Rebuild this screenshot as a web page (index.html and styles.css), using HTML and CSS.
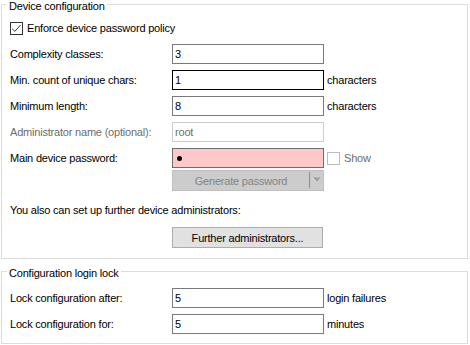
FILE: index.html
```html
<!DOCTYPE html>
<html>
<head>
<meta charset="utf-8">
<link rel="stylesheet" href="styles.css">
</head>
<body>
<fieldset class="group group-device">
  <legend class="group-title">Device configuration</legend>
  <div class="rows">
    <label class="check-row">
      <span class="check">
        <svg width="13" height="13" viewBox="0 0 13 13"><rect x="0.5" y="0.5" width="12" height="12" fill="#fff" stroke="#333"/><polyline points="2.2,6.8 4.8,9.4 10.6,3" fill="none" stroke="#333" stroke-width="1"/></svg>
      </span>
      <span>Enforce device password policy</span>
    </label>
    <div class="row">
      <span class="lbl">Complexity classes:</span>
      <input class="field" type="text" value="3">
    </div>
    <div class="row">
      <span class="lbl">Min. count of unique chars:</span>
      <input class="field field-focus" type="text" value="1">
      <span class="suffix">characters</span>
    </div>
    <div class="row">
      <span class="lbl">Minimum length:</span>
      <input class="field" type="text" value="8">
      <span class="suffix">characters</span>
    </div>
    <div class="row">
      <span class="lbl lbl-disabled">Administrator name (optional):</span>
      <input class="field field-disabled" type="text" value="root" disabled>
    </div>
    <div class="row">
      <span class="lbl">Main device password:</span>
      <div class="field field-pass"><span class="dot"></span></div>
      <span class="show">
        <span class="show-box"></span>
        <span class="show-text">Show</span>
      </span>
    </div>
    <div class="row row-gen">
      <span></span>
      <div class="split-btn">
        <span class="split-main">Generate password</span>
        <span class="split-arrow">
          <svg width="9" height="6" viewBox="0 0 9 6"><polygon points="0.5,0.5 8.5,0.5 4.5,5" fill="#9c9c9c"/><polyline points="0.5,0.5 4.5,5" fill="none" stroke="#e6e6e6" stroke-width="1"/></svg>
        </span>
      </div>
    </div>
    <div class="row row-text">
      <span class="note">You also can set up further device administrators:</span>
    </div>
    <div class="row row-further">
      <span></span>
      <button class="btn" type="button">Further administrators...</button>
    </div>
  </div>
</fieldset>
<fieldset class="group group-lock">
  <legend class="group-title">Configuration login lock</legend>
  <div class="rows">
    <div class="row">
      <span class="lbl">Lock configuration after:</span>
      <input class="field" type="text" value="5">
      <span class="suffix">login failures</span>
    </div>
    <div class="row">
      <span class="lbl">Lock configuration for:</span>
      <input class="field" type="text" value="5">
      <span class="suffix">minutes</span>
    </div>
  </div>
</fieldset>
</body>
</html>
```
FILE: styles.css
```css
* {
  box-sizing: border-box;
}

html,
body {
  margin: 0;
  padding: 0;
  background: #ffffff;
}

body {
  width: 470px;
  height: 345px;
  overflow: hidden;
  font-family: "Liberation Sans", Arial, sans-serif;
  font-size: 11px;
  letter-spacing: -0.2px;
  color: #000000;
}

.group {
  width: 467px;
  margin: 0 0 0 1px;
  border: 1px solid #dcdcdc;
  padding: 9px 0 11px 8px;
  min-width: 0;
}

.group-lock {
  margin-top: 8px;
  padding-top: 12px;
  padding-bottom: 9px;
}

.group-title {
  height: 9px;
  line-height: 13px;
  padding: 0 2px;
  margin-left: -3px;
}

.rows {
  display: flex;
  flex-direction: column;
}

.check-row {
  display: flex;
  align-items: center;
  height: 20px;
  gap: 4px;
}

.check {
  display: block;
  width: 13px;
  height: 13px;
}

.check svg {
  display: block;
}

.row {
  display: grid;
  grid-template-columns: 162px 152px auto;
  align-items: center;
  height: 20px;
  margin-top: 6px;
}

.group-lock .row:first-child {
  margin-top: 0;
}

.lbl-disabled {
  color: #6d6d6d;
}

.field {
  width: 152px;
  height: 20px;
  margin: 0;
  padding: 0 2px;
  border: 1px solid #7a7a7a;
  border-radius: 0;
  background: #ffffff;
  font: inherit;
  letter-spacing: inherit;
  color: #000000;
  outline: none;
}

.field-focus {
  border-color: #000000;
}

.field-disabled {
  border-color: #cccccc;
  color: #6d6d6d;
  background: #ffffff;
}

.field-pass {
  display: flex;
  align-items: center;
  background: #ffc8c8;
  border-color: #6e6e6e;
  padding-left: 4px;
}

.dot {
  display: block;
  width: 5px;
  height: 5px;
  border-radius: 50%;
  background: #000000;
}

.suffix {
  margin-left: 3px;
}

.show {
  display: flex;
  align-items: center;
  margin-left: 3px;
  gap: 4px;
  color: #6d6d6d;
}

.show-box {
  display: block;
  width: 13px;
  height: 13px;
  border: 1px solid #bcbcbc;
  background: #ffffff;
}

.row-gen {
  margin-top: 2px;
}

.split-btn {
  display: flex;
  width: 152px;
  height: 21px;
  border: 1px solid #bfbfbf;
  background: #cccccc;
  color: #838383;
}

.split-main {
  flex: 1;
  display: flex;
  align-items: center;
  justify-content: center;
}

.split-arrow {
  width: 14px;
  display: flex;
  align-items: center;
  justify-content: center;
  border-left: 1px solid #8f8f8f;
  margin: 1px 0 2px;
}

.split-arrow svg {
  display: block;
}

.row-text {
  margin-top: 10px;
}

.note {
  grid-column: 1 / 4;
}

.row-further {
  margin-top: 7px;
}

.btn {
  width: 151px;
  height: 21px;
  margin: 0;
  padding: 0;
  border: 1px solid #adadad;
  border-radius: 0;
  background: #e1e1e1;
  font: inherit;
  letter-spacing: inherit;
  color: #000000;
}
```
